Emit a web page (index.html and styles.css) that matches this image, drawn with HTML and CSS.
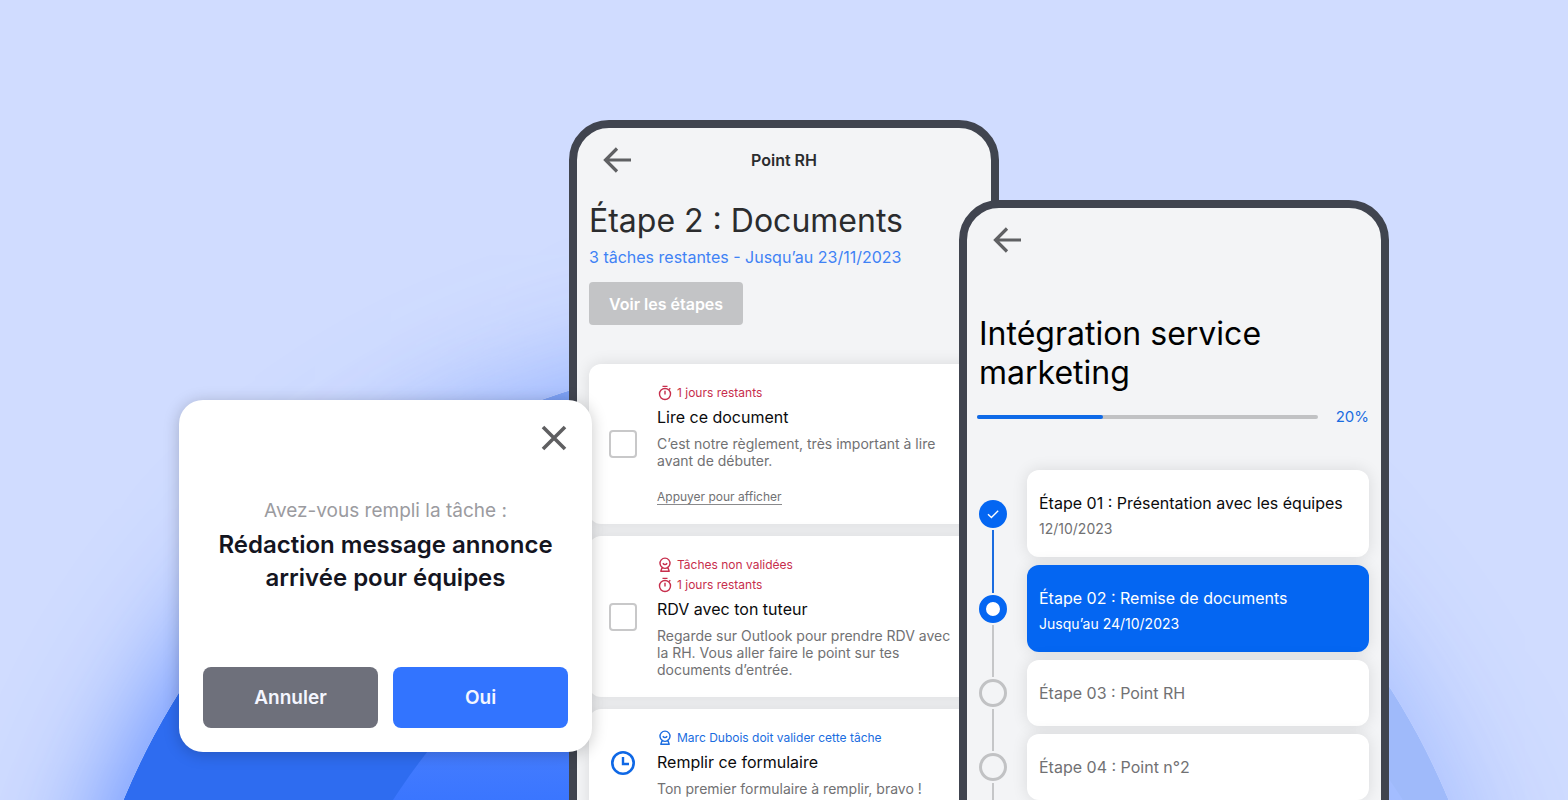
FILE: index.html
```html
<!DOCTYPE html>
<html lang="fr">
<head>
<meta charset="utf-8">
<meta name="viewport" content="width=device-width, initial-scale=1">
<title>Point RH</title>
<link rel="stylesheet" href="styles.css">
</head>
<body>
<svg width="0" height="0" class="defs" aria-hidden="true">
  <symbol id="arrow" viewBox="0 0 28 26"><path d="M28 13H3M14 1.500L2.500 13l11.500 11.500" fill="none" stroke="currentColor" stroke-width="3.200"/></symbol>
  <symbol id="timer" viewBox="0 0 16 16"><path d="M5.500 1.400h5M12 4.600l1.300-1.300M8 5.800v3.600" fill="none" stroke="currentColor" stroke-width="1.400"/><circle cx="8" cy="9" r="5.500" fill="none" stroke="currentColor" stroke-width="1.400"/></symbol>
  <symbol id="badge" viewBox="0 0 16 16"><path d="M5.200 10.300A5 5 0 1 1 10.800 10.300L12.200 14.300H3.800L5.200 10.300Q8 12.400 10.800 10.300M5.800 6.300Q8 8.900 10.200 6.300" fill="none" stroke="currentColor" stroke-width="1.400" stroke-linejoin="round"/></symbol>
</svg>
<main class="stage">
  <div class="orb" aria-hidden="true"><div class="orb-glow"></div><div class="orb-disc"><div class="orb-inner"></div></div></div>

  <section class="dialog" role="dialog" aria-labelledby="dialog-title">
    <button class="close" type="button" aria-label="Fermer">
      <svg width="26" height="26" viewBox="0 0 26 26"><path d="M2 2l22 22M24 2L2 24" stroke="currentColor" stroke-width="3.600"/></svg>
    </button>
    <p class="dialog-lead">Avez-vous rempli la tâche :</p>
    <h2 class="dialog-title" id="dialog-title">Rédaction message annonce arrivée pour équipes</h2>
    <div class="dialog-actions">
      <button class="btn btn-cancel" type="button">Annuler</button>
      <button class="btn btn-ok" type="button">Oui</button>
    </div>
  </section>

  <section class="phone phone-tasks">
    <header class="bar">
      <button class="back" type="button" aria-label="Retour"><svg width="28" height="26"><use href="#arrow"/></svg></button>
      <h2 class="bar-title">Point RH</h2>
    </header>
    <div class="intro">
      <h1 class="heading heading-soft">Étape 2 : Documents</h1>
      <p class="remaining">3 tâches restantes - Jusqu’au 23/11/2023</p>
      <button class="see-steps" type="button">Voir les étapes</button>
    </div>
    <ul class="tasks">
      <li class="task">
        <input class="check" type="checkbox" id="t1">
        <div class="task-body">
          <p class="tag tag-late"><svg class="tag-icon"><use href="#timer"/></svg>1 jours restants</p>
          <label class="task-title" for="t1">Lire ce document</label>
          <p class="task-text">C’est notre règlement, très important à lire avant de débuter.</p>
          <a class="task-link" href="#document">Appuyer pour afficher</a>
        </div>
      </li>
      <li class="task">
        <input class="check" type="checkbox" id="t2">
        <div class="task-body">
          <p class="tag tag-late"><svg class="tag-icon"><use href="#badge"/></svg>Tâches non validées</p>
          <p class="tag tag-late"><svg class="tag-icon"><use href="#timer"/></svg>1 jours restants</p>
          <label class="task-title" for="t2">RDV avec ton tuteur</label>
          <p class="task-text">Regarde sur Outlook pour prendre RDV avec la RH. Vous aller faire le point sur tes documents d’entrée.</p>
        </div>
      </li>
      <li class="task">
        <svg class="clock" viewBox="0 0 28 28" aria-hidden="true"><circle cx="14" cy="14" r="10.700" fill="none" stroke="currentColor" stroke-width="2.600"/><path d="M14 8v7h6" fill="none" stroke="currentColor" stroke-width="2.400"/></svg>
        <div class="task-body">
          <p class="tag tag-info"><svg class="tag-icon"><use href="#badge"/></svg>Marc Dubois doit valider cette tâche</p>
          <h3 class="task-title">Remplir ce formulaire</h3>
          <p class="task-text">Ton premier formulaire à remplir, bravo !</p>
        </div>
      </li>
    </ul>
  </section>

  <section class="phone phone-steps">
    <header class="bar">
      <button class="back" type="button" aria-label="Retour"><svg width="28" height="26"><use href="#arrow"/></svg></button>
    </header>
    <h1 class="heading heading-steps">Intégration service marketing</h1>
    <div class="progress">
      <div class="track" role="progressbar" aria-label="Progression" aria-valuenow="20" aria-valuemin="0" aria-valuemax="100"><div class="fill"></div></div>
      <span class="percent">20%</span>
    </div>
    <ol class="steps">
      <li class="step">
        <div class="rail"><span class="line line-none"></span><span class="dot dot-done"><svg width="14" height="14" viewBox="0 0 14 14"><path d="M2 7.200l3.400 3.300L12.200 3.800" fill="none" stroke="currentColor" stroke-width="1.400"/></svg></span><span class="line line-done"></span></div>
        <div class="step-card"><h3 class="step-title">Étape 01 : Présentation avec les équipes</h3><p class="step-date">12/10/2023</p></div>
      </li>
      <li class="step">
        <div class="rail"><span class="line line-done"></span><span class="dot dot-current"></span><span class="line"></span></div>
        <div class="step-card step-card-current"><h3 class="step-title">Étape 02 : Remise de documents</h3><p class="step-date">Jusqu’au 24/10/2023</p></div>
      </li>
      <li class="step">
        <div class="rail"><span class="line"></span><span class="dot"></span><span class="line"></span></div>
        <div class="step-card step-card-next"><h3 class="step-title">Étape 03 : Point RH</h3></div>
      </li>
      <li class="step">
        <div class="rail"><span class="line"></span><span class="dot"></span><span class="line"></span></div>
        <div class="step-card step-card-next"><h3 class="step-title">Étape 04 : Point n°2</h3></div>
      </li>
    </ol>
  </section>
</main>
</body>
</html>
```
FILE: styles.css
```css
*, *::before, *::after { box-sizing: border-box; }
body, h1, h2, h3, p, ul, ol { margin: 0; padding: 0; }
ul, ol { list-style: none; }
body {
  font-family: Inter, "Liberation Sans", sans-serif;
  background: #d0dcff;
  color: #0b0b0d;
}
button { font: inherit; border: 0; padding: 0; cursor: pointer; }
svg { display: block; }
.defs { position: absolute; }

.stage {
  position: relative;
  height: 100vh;
  overflow: hidden;
  display: flex;
  justify-content: center;
  align-items: flex-start;
}

/* Background disc with its glow */
.orb {
  position: absolute;
  top: 357px;
  left: 50%;
  width: 1434px;
  height: 1434px;
  margin-left: -715px;
}
.orb-glow {
  position: absolute;
  inset: -200px;
  -webkit-mask-image: linear-gradient(90deg, #000 16%, rgba(0, 0, 0, .6) 36%, rgba(0, 0, 0, .4) 80%);
  mask-image: linear-gradient(90deg, #000 16%, rgba(0, 0, 0, .6) 36%, rgba(0, 0, 0, .4) 80%);
}
.orb-glow::before {
  content: "";
  position: absolute;
  inset: 200px;
  border-radius: 50%;
  box-shadow: 0 0 120px 6px rgba(60, 115, 255, .8);
}
.orb-disc {
  position: absolute;
  inset: 0;
  border-radius: 50%;
  overflow: hidden;
  background: linear-gradient(180deg, #7fa2f5 2%, #2e6cf0 24%);
  -webkit-mask-image: linear-gradient(90deg, #000 50%, rgba(0, 0, 0, .3) 88%);
  mask-image: linear-gradient(90deg, #000 50%, rgba(0, 0, 0, .3) 88%);
}
.orb-inner {
  position: absolute;
  top: 167px;
  left: 229px;
  width: 1200px;
  height: 1200px;
  border-radius: 50%;
  background: linear-gradient(180deg, #6c97fc 2%, #3874ff 24%);
}

/* Confirmation dialog */
.dialog {
  position: relative;
  z-index: 3;
  flex: none;
  width: 413px;
  margin-top: 400px;
  margin-right: -23px;
  padding: 24px;
  display: flex;
  flex-direction: column;
  text-align: center;
  background: #fff;
  border-radius: 24px;
  box-shadow: 0 2px 16px rgba(0, 0, 0, .22);
}
.close {
  align-self: flex-end;
  display: grid;
  place-items: center;
  width: 28px;
  height: 28px;
  background: none;
  color: #5f5f61;
}
.dialog-lead { margin-top: 47px; font-size: 19px; line-height: 24px; color: #9b9b9f; }
.dialog-title { margin-top: 5px; font-size: 24px; line-height: 33px; font-weight: 600; color: #14151f; }
.dialog-actions { display: flex; gap: 15px; margin-top: 73px; }
.btn {
  flex: 1;
  height: 61px;
  border-radius: 8px;
  font-size: 19px;
  font-weight: 600;
  color: #f4f6ff;
}
.btn-cancel { background: #6e707b; }
.btn-ok { background: #3274ff; }

/* Phones */
.phone {
  position: relative;
  flex: none;
  width: 430px;
  padding: 0 12px 40px;
  background: #f3f4f6;
  border: 8px solid #40444f;
  border-radius: 40px;
}
.phone-tasks { z-index: 1; margin-top: 120px; }
.phone-steps { z-index: 2; margin-top: 200px; margin-left: -40px; }
.bar {
  height: 64px;
  display: grid;
  grid-template-columns: 1fr auto 1fr;
  align-items: center;
  padding: 0 14px;
}
.back { width: 28px; height: 26px; background: none; color: #5f6063; }
.bar-title { font-size: 16px; line-height: 20px; font-weight: 600; color: #2b2c2e; }
.heading { font-size: 32px; line-height: 39px; font-weight: 400; }
.heading-soft { color: #2b2c2e; }
.intro { padding-top: 9px; }
.remaining { margin-top: 8px; font-size: 16px; line-height: 19px; color: #3f82f5; }
.see-steps {
  margin-top: 15px;
  padding: 0 20px;
  height: 43px;
  border-radius: 4px;
  background: #c3c4c6;
  color: #fff;
  font-size: 16px;
  font-weight: 600;
}

/* Task list */
.tasks { display: grid; gap: 12px; margin-top: 39px; }
.task {
  display: flex;
  align-items: center;
  gap: 20px;
  padding: 19px 20px;
  background: #fff;
  border-radius: 12px;
  box-shadow: 0 0 16px rgba(0, 0, 0, .11);
}
.check {
  appearance: none;
  flex: none;
  width: 28px;
  height: 28px;
  margin: 0;
  border: 2px solid #c8c8c9;
  border-radius: 4px;
  background: #fff;
}
.clock { flex: none; width: 28px; height: 28px; color: #0f68e6; }
.tag { display: flex; align-items: center; gap: 4px; font-size: 12px; line-height: 20px; }
.tag-icon { width: 16px; height: 16px; }
.tag-late { color: #c72e4c; }
.tag-info { color: #1a6ce0; }
.task-title { display: block; margin-top: 5px; font-size: 16px; line-height: 19px; font-weight: 400; }
.task-text { margin-top: 8px; font-size: 14px; line-height: 17px; color: #717173; }
.task-link {
  display: inline-block;
  margin-top: 20px;
  font-size: 12px;
  line-height: 15px;
  color: #717173;
  text-decoration: none;
  border-bottom: 1px solid #8a8a8c;
  vertical-align: top;
}

/* Steps */
.heading-steps { margin-top: 42px; color: #000; }
.progress { display: flex; align-items: center; gap: 18px; margin: 15px 0 0 -2px; }
.track { flex: 1; height: 4px; border-radius: 2px; background: #c1c2c4; }
.fill { width: 37%; height: 4px; border-radius: 2px; background: #0f6ae8; }
.percent { font-size: 15px; line-height: 20px; color: #1a6ce0; }
.steps { display: grid; gap: 8px; margin-top: 43px; }
.step { display: flex; gap: 20px; }
.rail { flex: none; width: 28px; display: flex; flex-direction: column; align-items: center; gap: 2px; }
.line { flex: 1; width: 2px; margin: -4px 0; background: #c5c6c8; }
.line:first-child { margin-bottom: 0; }
.line:last-child { margin-top: 0; }
.line-none { visibility: hidden; }
.line-done { background: #1a6ce0; }
.dot {
  flex: none;
  display: grid;
  place-items: center;
  width: 28px;
  height: 28px;
  border: 3px solid #c1c2c4;
  border-radius: 50%;
  color: #fff;
}
.dot-done { border: 0; background: #0466f2; }
.dot-current { border: 7px solid #0466f2; background: #fff; }
.step-card {
  flex: 1;
  min-height: 66px;
  padding: 24px 12px 20px;
  background: #fff;
  border-radius: 12px;
  box-shadow: 0 0 16px rgba(0, 0, 0, .11);
}
.step-title { font-size: 16px; line-height: 19px; font-weight: 400; }
.step-date { margin-top: 7px; font-size: 14px; line-height: 17px; color: #717173; }
.step-card-current, .step-card-current .step-date { color: #fff; }
.step-card-current { background: #0466f2; }
.step-card-next { color: #717173; }
```
